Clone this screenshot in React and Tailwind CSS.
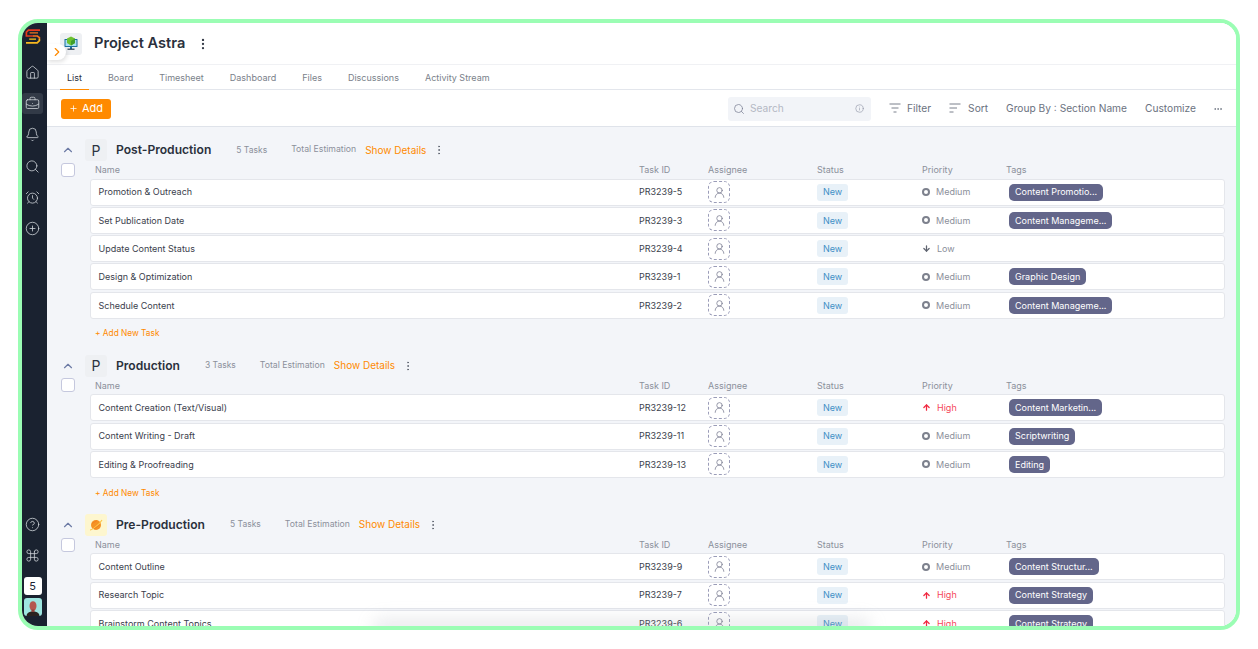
import {
  AlarmClock,
  ArrowDown,
  ArrowUp,
  Bell,
  BriefcaseBusiness,
  ChevronRight,
  ChevronUp,
  CircleHelp,
  CirclePlus,
  Command,
  Ellipsis,
  EllipsisVertical,
  House,
  Info,
  Plus,
  Search,
  UserRound,
} from "lucide-react";

const FONT = "[font-family:Inter,'Liberation_Sans',sans-serif]";
const COLS = "grid grid-cols-[549px_69px_109px_105px_84px_1fr] items-center";
const ROW_COLS = "grid grid-cols-[548px_69px_109px_105px_84px_1fr] items-center";

const TABS = ["List", "Board", "Timesheet", "Dashboard", "Files", "Discussions", "Activity Stream"];

const SECTIONS = [
  {
    name: "Post-Production",
    count: "5 Tasks",
    tile: "P",
    tasks: [
      ["Promotion & Outreach", "PR3239-5", "Medium", "Content Promotio..."],
      ["Set Publication Date", "PR3239-3", "Medium", "Content Manageme..."],
      ["Update Content Status", "PR3239-4", "Low", ""],
      ["Design & Optimization", "PR3239-1", "Medium", "Graphic Design"],
      ["Schedule Content", "PR3239-2", "Medium", "Content Manageme..."],
    ],
  },
  {
    name: "Production",
    count: "3 Tasks",
    tile: "P",
    tasks: [
      ["Content Creation (Text/Visual)", "PR3239-12", "High", "Content Marketin..."],
      ["Content Writing - Draft", "PR3239-11", "Medium", "Scriptwriting"],
      ["Editing & Proofreading", "PR3239-13", "Medium", "Editing"],
    ],
  },
  {
    name: "Pre-Production",
    count: "5 Tasks",
    tile: "planet",
    tasks: [
      ["Content Outline", "PR3239-9", "Medium", "Content Structur..."],
      ["Research Topic", "PR3239-7", "High", "Content Strategy"],
      ["Brainstorm Content Topics", "PR3239-6", "High", "Content Strategy"],
    ],
  },
];

const Logo = () => (
  <svg width="16" height="15" viewBox="0 0 16 15" fill="none">
    <path d="M15 1.2H3.4L1.4 3.2V7H8" stroke="#e5391d" strokeWidth="1.7" />
    <path d="M8 7H12.4L14.4 8.6V10" stroke="#f4761c" strokeWidth="1.7" />
    <path d="M14.4 10V11.6L12.2 13.8H1" stroke="#f8b81f" strokeWidth="1.7" />
    <path d="M4.2 10.2H11" stroke="#f8c51f" strokeWidth="1.3" />
    <path d="M13 3.9H4.6" stroke="#f4761c" strokeWidth="1.2" />
  </svg>
);

const ProjectIcon = () => (
  <svg width="14" height="15" viewBox="0 0 14 15">
    <rect x="0.5" y="3" width="13" height="8" rx="0.6" fill="#1b6f9e" />
    <rect x="1.5" y="4" width="11" height="6" fill="#a9e0f0" />
    <path d="M7 0.5L11 2.6V7L7 9.4L3 7V2.6Z" fill="#6cc12f" />
    <path d="M7 5L11 2.6V7L7 9.4Z" fill="#3f9e2c" />
    <rect x="6" y="11" width="2" height="2" fill="#1b6f9e" />
    <rect x="3.5" y="12.6" width="7" height="1.2" fill="#23394b" />
  </svg>
);

const PlanetIcon = () => (
  <svg width="14" height="14" viewBox="0 0 14 14">
    <circle cx="7" cy="7" r="5" fill="#f59324" />
    <path d="M1 12C3 12 10.5 6.5 13 2" stroke="#fbc54a" strokeWidth="1.1" fill="none" />
    <path d="M3 5.5L8 2.6M5 11L11 6.6" stroke="#f0801f" strokeWidth="0.9" />
  </svg>
);

const Avatar = () => (
  <svg width="18" height="18" viewBox="0 0 18 18">
    <rect width="18" height="18" fill="#9ee6e0" />
    <path d="M2.5 18C3 14.2 5.5 13.4 9 13.4S15 14.2 15.5 18Z" fill="#2a2320" />
    <ellipse cx="9" cy="8" rx="3.5" ry="4.8" fill="#b4574f" />
    <rect x="7.5" y="11.5" width="3" height="2.5" fill="#94423c" />
  </svg>
);

const FilterIcon = ({ right }) => (
  <svg width="12" height="10" viewBox="0 0 12 10" fill="none" stroke="#6b7280" strokeWidth="0.9">
    {right ? (
      <path d="M0.5 1H11.5M0.5 5H8M0.5 9H4.5" />
    ) : (
      <path d="M0.5 1H11.5M2.5 5H9.5M4.5 9H7.5" />
    )}
  </svg>
);

const Priority = ({ level }) => {
  if (level === "High")
    return (
      <div className="flex items-center text-[9px] text-[#f5475b]">
        <ArrowUp className="w-[9px] h-[9px] mr-[6px] text-[#f0273f]" strokeWidth={3.4} />
        High
      </div>
    );
  if (level === "Low")
    return (
      <div className="flex items-center text-[9px] text-[#8b909b]">
        <ArrowDown className="w-[9px] h-[9px] mr-[6px] text-[#5f6470]" strokeWidth={3.4} />
        Low
      </div>
    );
  return (
    <div className="flex items-center text-[9px] text-[#8b909b]">
      <span className="w-[8px] h-[8px] mr-[6px] rounded-full border-2 border-[#7d818d]" />
      Medium
    </div>
  );
};

const TaskRow = ({ task }) => {
  const [name, id, priority, tag] = task;
  return (
    <div className={`${ROW_COLS} h-[27px] mb-[1.33px] bg-white border border-[#e4e6eb] rounded-[3px] text-[9px]`}>
      <div className="pl-[7.5px] text-[#3a404c]">{name}</div>
      <div className="text-[#3a404c]">{id}</div>
      <div>
        <div className="w-[22px] h-[22px] flex items-center justify-center rounded-[6px] border border-dashed border-[#9a9cb8]">
          <UserRound className="w-[13px] h-[13px] text-[#6d7088]" strokeWidth={1.3} />
        </div>
      </div>
      <div>
        <span className="inline-flex items-center justify-center w-[31px] h-[17px] rounded-[3px] bg-[#e8f1f8] text-[#3f8fc6]">
          New
        </span>
      </div>
      <Priority level={priority} />
      <div className="pl-[3px]">
        {tag && (
          <span className="inline-flex items-center h-[17px] px-[6px] rounded-[5px] bg-[#63668a] text-white whitespace-nowrap">
            {tag}
          </span>
        )}
      </div>
    </div>
  );
};

const Section = ({ section }) => (
  <section className="pl-[14px] pr-[11px]">
    <div className="flex items-center h-[22px]">
      <div className="w-[24px] flex">
        <ChevronUp className="w-[14px] h-[14px] text-[#6c7aa5]" strokeWidth={2} />
      </div>
      <div
        className={`w-[22px] h-[22px] rounded-[3px] flex items-center justify-center text-[14px] text-[#2c3240] ${
          section.tile === "planet" ? "bg-[#fdf6cf]" : "bg-[#eef0f3]"
        }`}
      >
        {section.tile === "planet" ? <PlanetIcon /> : section.tile}
      </div>
      <h2 className="ml-[9px] text-[12.1px] font-semibold text-[#2a303c]">{section.name}</h2>
      <span className="ml-[25px] text-[8.5px] text-[#8b909b]">{section.count}</span>
      <span className="ml-[24px] text-[8.7px] text-[#8b909b]">Total Estimation</span>
      <span className="ml-[9px] text-[10px] text-[#ff8a00]">Show Details</span>
      <EllipsisVertical className="ml-[7px] w-[12px] h-[12px] text-[#5f6470]" strokeWidth={1.8} />
    </div>
    <div className="flex items-center h-[17.5px]">
      <div className="w-[29px]">
        <div className="w-[14px] h-[14px] rounded-[3px] bg-white border border-[#c5c8de]" />
      </div>
      <div className={`${COLS} flex-1 text-[9px] text-[#8b909b]`}>
        <div className="pl-[5px]">Name</div>
        <div>Task ID</div>
        <div>Assignee</div>
        <div>Status</div>
        <div>Priority</div>
        <div>Tags</div>
      </div>
    </div>
    <div className="pl-[29px]">
      {section.tasks.map((task) => (
        <TaskRow key={task[1]} task={task} />
      ))}
      <div className="flex items-center h-[27px] pl-[5px] text-[8.3px] text-[#ff8a00]">+ Add New Task</div>
    </div>
  </section>
);

const NavIcon = ({ icon: Icon, active }) => (
  <div className={`w-[21px] h-[21px] flex items-center justify-center rounded-[3px] ${active ? "bg-[#323a47]" : ""}`}>
    <Icon className="w-[15px] h-[15px] text-[#d4d8de]" strokeWidth={1.25} />
  </div>
);

const App = () => {
  return (
    <div className={`${FONT} w-[1258px] h-[649px] pt-[19px] pl-[18px] bg-white overflow-hidden`}>
      <div className="relative flex w-[1222px] h-[611px] border-4 border-[#9bfdb4] rounded-[20px] overflow-hidden bg-white">
        <aside className="w-[25px] shrink-0 flex flex-col items-center bg-[#1a2230] pt-[6px] pb-[10px] pr-[4px]">
          <Logo />
          <div className="mt-[18px] flex flex-col items-center gap-[10.2px]">
            <NavIcon icon={House} />
            <NavIcon icon={BriefcaseBusiness} active />
            <NavIcon icon={Bell} />
            <NavIcon icon={Search} />
            <NavIcon icon={AlarmClock} />
            <NavIcon icon={CirclePlus} />
          </div>
          <div className="mt-auto flex flex-col items-center">
            <NavIcon icon={CircleHelp} />
            <div className="mt-[10px]">
              <NavIcon icon={Command} />
            </div>
            <div className="mt-[11px] w-[18px] h-[18px] rounded-[3px] bg-white flex items-center justify-center text-[11px] text-[#1a2230]">
              5
            </div>
            <div className="mt-[3px] w-[18px] h-[18px] rounded-[3px] overflow-hidden">
              <Avatar />
            </div>
          </div>
        </aside>

        <div className="flex-1 min-w-0 flex flex-col bg-[#f3f5f9]">
          <header className="h-[42px] shrink-0 flex items-center pl-[13px] bg-white border-b border-[#f0f1f4]">
            <div className="w-[22px] h-[22px] rounded-[3px] bg-[#eef0f3] flex items-center justify-center">
              <ProjectIcon />
            </div>
            <h1 className="ml-[12px] text-[14.6px] font-semibold text-[#2a303c]">Project Astra</h1>
            <EllipsisVertical className="ml-[11px] w-[14px] h-[14px] text-[#3a404c]" strokeWidth={2} />
          </header>

          <nav className="h-[25px] shrink-0 flex items-stretch pl-[13px] bg-white border-b border-[#e3e6ec] text-[9px]">
            {TABS.map((tab, i) => (
              <div
                key={tab}
                className={`flex items-center pt-[1px] px-[7px] mr-[12px] -mb-px border-b ${
                  i === 0 ? "text-[#2a303c] border-[#ff8a00]" : "text-[#7a7f8a] border-transparent"
                }`}
              >
                {tab}
              </div>
            ))}
          </nav>

          <div className="h-[37px] shrink-0 flex items-center pt-[1px] pl-[14px] pr-[13px] bg-white border-b border-[#dfe3ea] text-[10.2px] text-[#6b7280]">
            <button className="w-[50px] h-[20px] flex items-center justify-center gap-[4px] rounded-[3px] bg-[#ff8a00] text-white text-[11px]">
              <Plus className="w-[9px] h-[9px]" strokeWidth={2} />
              Add
            </button>
            <div className="ml-auto w-[143px] h-[24px] flex items-center px-[5px] rounded-[3px] bg-[#f2f4f8] text-[#b4b8c4]">
              <Search className="w-[12px] h-[12px] text-[#7c8296]" strokeWidth={1.5} />
              <span className="ml-[5px]">Search</span>
              <Info className="ml-auto mr-[2px] w-[9px] h-[9px] text-[#8a8fa0]" strokeWidth={1.5} />
            </div>
            <div className="ml-[18px] flex items-center gap-[6px]">
              <FilterIcon />
              Filter
            </div>
            <div className="ml-[18px] flex items-center gap-[7px]">
              <FilterIcon right />
              Sort
            </div>
            <div className="ml-[18px]">Group By : Section Name</div>
            <div className="ml-[18px]">Customize</div>
            <Ellipsis className="ml-[17px] w-[10px] h-[10px]" strokeWidth={2} />
          </div>

          <main className="flex-1 min-h-0 overflow-hidden pt-[12px] flex flex-col gap-[7.6px]">
            {SECTIONS.map((section) => (
              <Section key={section.name} section={section} />
            ))}
          </main>
        </div>

        <button className="absolute left-[25px] top-[21px] w-[19px] h-[16px] flex items-center justify-center rounded-r-full rounded-bl-[4px] bg-white shadow-[1px_2px_4px_rgba(0,0,0,0.12)]">
          <ChevronRight className="w-[14px] h-[14px] text-[#ff8a00]" strokeWidth={2} />
        </button>
        <div className="absolute bottom-[-12px] left-[350px] w-[500px] h-[20px] bg-[#9aa0a8]/20 blur-[8px] rounded-full" />
      </div>
    </div>
  );
};

export default App;
